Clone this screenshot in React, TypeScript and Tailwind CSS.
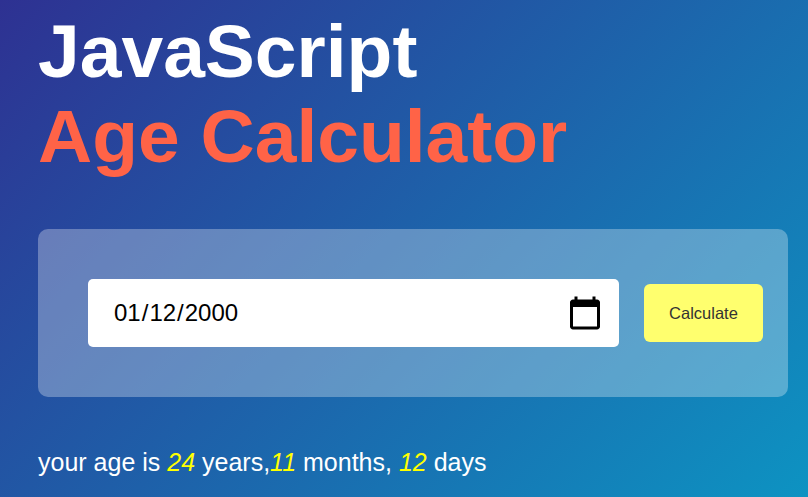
export default function App() {
  return (
    <div className="h-[497px] w-[808px] overflow-hidden bg-[linear-gradient(135deg,#2e3192,#0d93c2)] pl-[38px] font-['Liberation_Sans',Arial,sans-serif]">
      <h1 className="pt-[9px] text-[75px] leading-[85px] font-bold text-white">
        JavaScript
        <br />
        <span className="text-[#ff6347]">Age Calculator</span>
      </h1>
      <div className="mt-[50px] flex h-[168px] w-[750px] items-center gap-[25px] rounded-[10px] bg-white/30 pl-[50px]">
        <input
          type="date"
          defaultValue="2000-01-12"
          className="h-[68px] w-[531px] rounded-[5px] border-0 bg-white pr-[16px] pl-[25px] text-[24px] text-black outline-none [&::-webkit-calendar-picker-indicator]:m-0 [&::-webkit-calendar-picker-indicator]:mt-[3px] [&::-webkit-calendar-picker-indicator]:h-[40px] [&::-webkit-calendar-picker-indicator]:w-[36px] [&::-webkit-calendar-picker-indicator]:bg-[length:36px_36px] [&::-webkit-calendar-picker-indicator]:p-0"
        />
        <button className="h-[58px] w-[119px] rounded-[6px] bg-[#ffff6e] text-[16.5px] text-[#333333]">
          Calculate
        </button>
      </div>
      <p className="mt-[50px] text-[25px] leading-[30px] text-white">
        your age is <em className="text-[#ffff00]">24</em> years,<em className="text-[#ffff00]">11</em> months,{" "}
        <em className="text-[#ffff00]">12</em> days
      </p>
    </div>
  )
}
